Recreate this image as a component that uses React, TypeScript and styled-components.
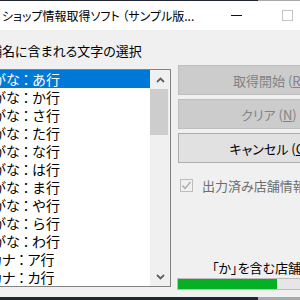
import styled, { createGlobalStyle } from "styled-components";

const GlobalStyle = createGlobalStyle`
  html, body {
    margin: 0;
    padding: 0;
    width: 300px;
    height: 300px;
    overflow: hidden;
    background: #f0f0f0;
  }
`;

const Window = styled.div`
  width: 300px;
  height: 300px;
  overflow: hidden;
  display: flex;
  flex-direction: column;
  font-family: "Noto Sans CJK JP", "Noto Sans", sans-serif;
  font-feature-settings: "palt";
  color: #000;
`;

const DesktopEdge = styled.div<{ $h: number }>`
  flex: none;
  height: ${(p) => p.$h}px;
  background: linear-gradient(to right, #1f262e 0 258px, #a9a9a9 258px);
`;

const TitleBar = styled.div`
  flex: none;
  height: 29px;
  background: #fff;
  display: flex;
  align-items: center;
`;

const Title = styled.div`
  flex: none;
  width: 211px;
  padding-left: 2px;
  font-size: 12px;
  line-height: 16px;
  white-space: nowrap;
`;

const CaptionButton = styled.div<{ $w: number }>`
  flex: none;
  width: ${(p) => p.$w}px;
  height: 100%;
  display: flex;
  align-items: center;
  justify-content: center;
`;

const MinGlyph = styled.div`
  width: 11px;
  height: 1px;
  background: #111;
`;

const MaxGlyph = styled.div`
  width: 9px;
  height: 9px;
  border: 1px solid #c4c4c4;
`;

const Body = styled.div`
  flex: 1;
  min-height: 0;
  display: flex;
  gap: 7px;
`;

const LeftPane = styled.div`
  flex: none;
  width: 216px;
  margin-left: -45px;
  padding-top: 13px;
  display: flex;
  flex-direction: column;
`;

const GroupLabel = styled.div`
  font-size: 13px;
  line-height: 16px;
  padding-left: 21px;
  white-space: nowrap;
`;

const ListBox = styled.div`
  margin-top: 10px;
  height: 216px;
  border: 1px solid #828282;
  background: #fff;
  display: flex;
`;

const Items = styled.div`
  flex: 1;
  min-width: 0;
  overflow: hidden;
`;

const Item = styled.div<{ $selected?: boolean; $prop?: boolean }>`
  height: 18px;
  line-height: 18px;
  font-size: 14px;
  font-feature-settings: ${(p) => (p.$prop ? '"palt"' : "normal")};
  padding-left: 8px;
  white-space: nowrap;
  background: ${(p) => (p.$selected ? "#0078d7" : "transparent")};
  color: ${(p) => (p.$selected ? "#fff" : "#000")};
`;

const Colon = styled.span`
  font-feature-settings: "palt";
  margin: 0 2.5px;
`;

const ScrollBar = styled.div`
  flex: none;
  width: 20px;
  background: #f0f0f0;
  display: flex;
  flex-direction: column;
`;

const ArrowButton = styled.div`
  flex: none;
  height: 19px;
  display: flex;
  align-items: center;
  justify-content: center;
`;

const Thumb = styled.div`
  flex: none;
  height: 46px;
  margin: 0 2px 0 0;
  background: #cdcdcd;
`;

const Track = styled.div`
  flex: 1;
`;

const RightPane = styled.div`
  flex: none;
  width: 182px;
  padding-top: 35px;
  padding-bottom: 7px;
  display: flex;
  flex-direction: column;
`;

const ActionButton = styled.button`
  flex: none;
  height: 30px;
  margin: 0 0 4px;
  padding: 0;
  font-family: inherit;
  font-feature-settings: "palt";
  font-size: 13px;
  border: 1px solid #adadad;
  background: #e1e1e1;
  color: #000;
  white-space: nowrap;

  &:disabled {
    border-color: #bfbfbf;
    background: #cccccc;
    color: #838383;
  }
`;

const CheckRow = styled.div`
  margin-top: 10px;
  height: 16px;
  display: flex;
  align-items: center;
  gap: 9px;
  padding-left: 2px;
  font-size: 13px;
  color: #6d6d6d;
  white-space: nowrap;
`;

const CheckBox = styled.div`
  flex: none;
  width: 11px;
  height: 11px;
  border: 1px solid #bcbcbc;
  display: flex;
  align-items: center;
  justify-content: center;
`;

const ProgressArea = styled.div`
  margin-top: auto;
  display: flex;
  flex-direction: column;
  gap: 2px;
`;

const ProgressText = styled.div`
  font-size: 13px;
  line-height: 16px;
  padding-left: 34px;
  white-space: nowrap;
`;

const ProgressBar = styled.div`
  height: 10px;
  margin-left: -1px;
  border: 1px solid #bcbcbc;
  background: #e6e6e6;
`;

const ProgressFill = styled.div`
  height: 100%;
  background: #06b025;
`;

const rows: [string, string][] = [
  ["ひらがな", "あ行"],
  ["ひらがな", "か行"],
  ["ひらがな", "さ行"],
  ["ひらがな", "た行"],
  ["ひらがな", "な行"],
  ["ひらがな", "は行"],
  ["ひらがな", "ま行"],
  ["ひらがな", "や行"],
  ["ひらがな", "ら行"],
  ["ひらがな", "わ行"],
  ["カタカナ", "ア行"],
  ["カタカナ", "カ行"],
];

const Chevron = ({ up }: { up?: boolean }) => (
  <svg width="9" height="6" viewBox="0 0 9 6">
    <polyline
      points={up ? "1,5 4.5,1.5 8,5" : "1,1 4.5,4.5 8,1"}
      fill="none"
      stroke="#606060"
      strokeWidth="1.8"
    />
  </svg>
);

export default function App() {
  const progress = 0.545;

  return (
    <Window>
      <GlobalStyle />
      <DesktopEdge $h={1} />
      <TitleBar>
        <Title>ショップ情報取得ソフト （サンプル版...</Title>
        <CaptionButton $w={46}>
          <MinGlyph />
        </CaptionButton>
        <CaptionButton $w={56}>
          <MaxGlyph />
        </CaptionButton>
        <CaptionButton $w={46} />
      </TitleBar>
      <Body>
        <LeftPane>
          <GroupLabel>店舗名に含まれる文字の選択</GroupLabel>
          <ListBox>
            <Items>
              {rows.map(([kind, line], i) => (
                <Item key={kind + line} $selected={i === 0} $prop={kind === "カタカナ"}>
                  {kind}
                  <Colon>：</Colon>
                  {line}
                </Item>
              ))}
            </Items>
            <ScrollBar>
              <ArrowButton>
                <Chevron up />
              </ArrowButton>
              <Thumb />
              <Track />
              <ArrowButton>
                <Chevron />
              </ArrowButton>
            </ScrollBar>
          </ListBox>
        </LeftPane>
        <RightPane>
          <ActionButton disabled>
            取得開始 (<u>R</u>)
          </ActionButton>
          <ActionButton disabled>
            クリア (<u>N</u>)
          </ActionButton>
          <ActionButton>
            キャンセル (<u>C</u>)
          </ActionButton>
          <CheckRow>
            <CheckBox>
              <svg width="11" height="11" viewBox="0 0 11 11">
                <polyline points="1.5,5.5 4,8.5 9.5,2" fill="none" stroke="#a9a9a9" strokeWidth="1.3" />
              </svg>
            </CheckBox>
            出力済み店舗情報を除外
          </CheckRow>
          <ProgressArea>
            <ProgressText>「か」を含む店舗情報を取得中</ProgressText>
            <ProgressBar>
              <ProgressFill style={{ width: `${progress * 100}%` }} />
            </ProgressBar>
          </ProgressArea>
        </RightPane>
      </Body>
      <DesktopEdge $h={3} />
    </Window>
  );
}
